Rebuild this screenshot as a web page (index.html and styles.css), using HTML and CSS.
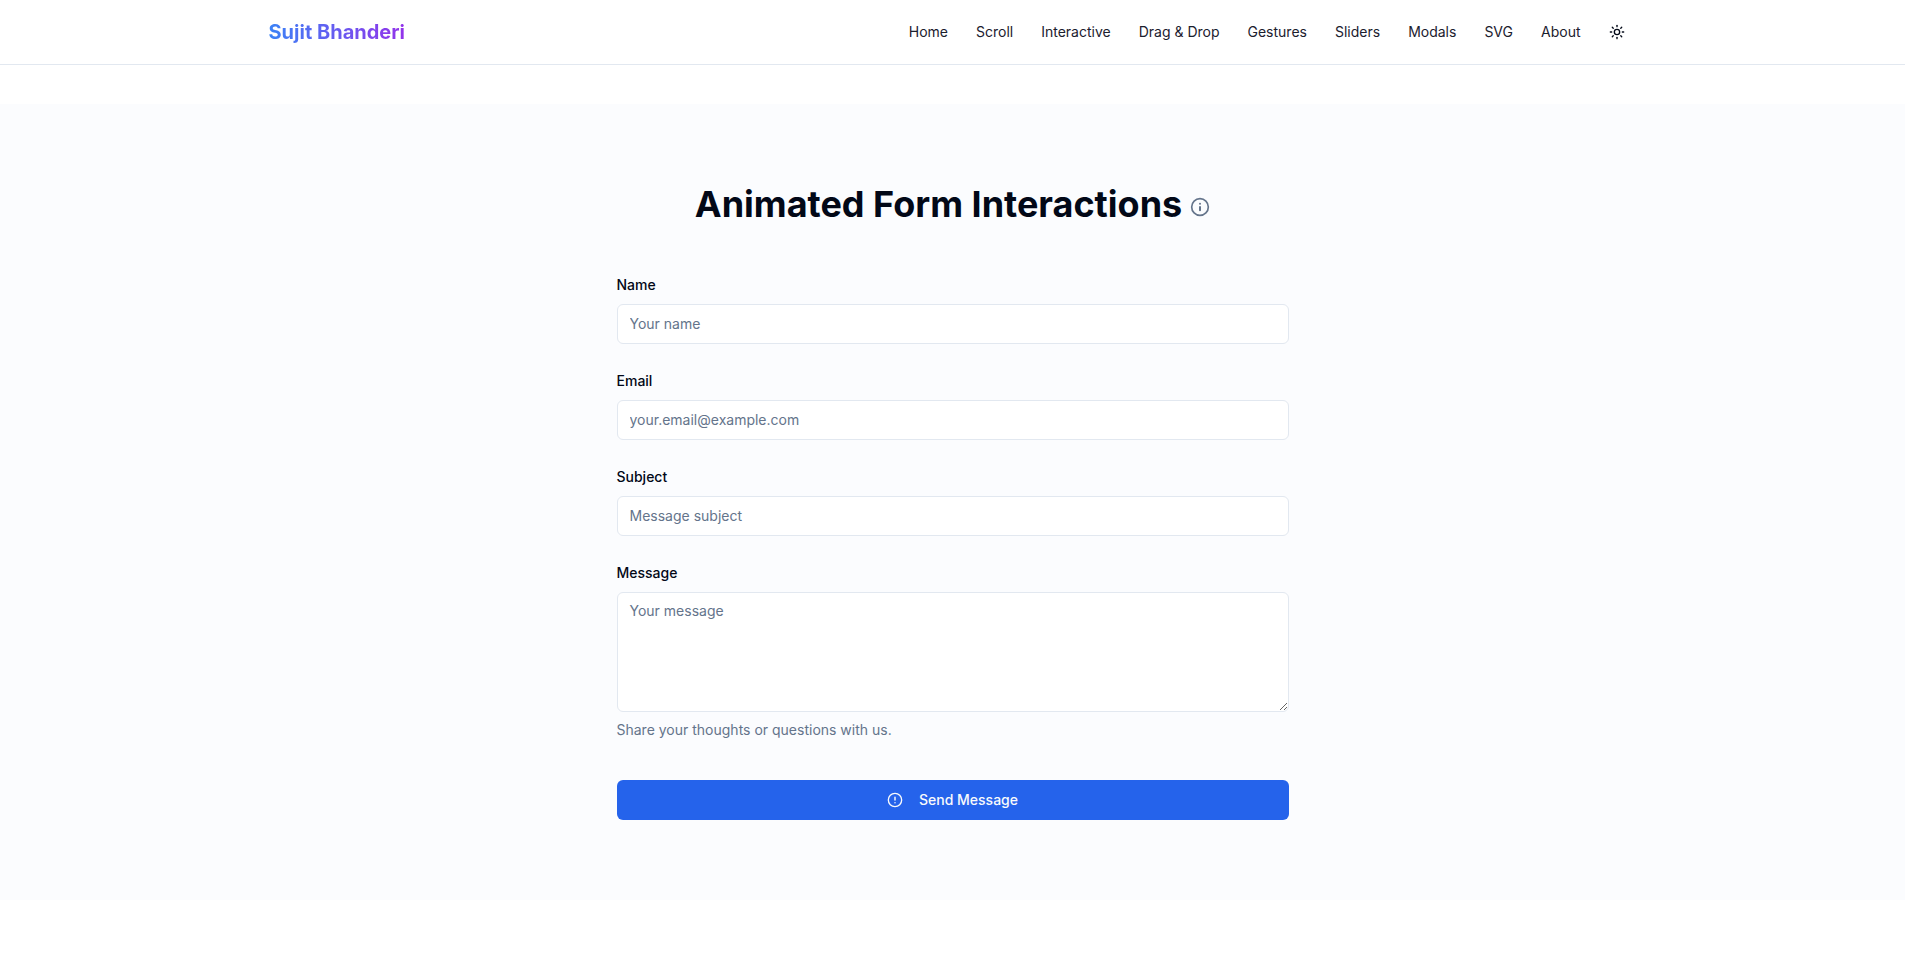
FILE: index.html
```
<!DOCTYPE html>
<html lang="en">
<head>
<meta charset="utf-8">
<title>Sujit Bhanderi</title>
<link rel="stylesheet" href="styles.css">
</head>
<body>
<header class="header">
  <div class="container">
    <a class="logo">Sujit Bhanderi</a>
    <nav class="nav">
      <a>Home</a><a>Scroll</a><a>Interactive</a><a>Drag &amp; Drop</a><a>Gestures</a><a>Sliders</a><a>Modals</a><a>SVG</a><a>About</a>
      <button class="theme" aria-label="Toggle theme">
        <svg width="16" height="16" viewBox="0 0 24 24" fill="none" stroke="currentColor" stroke-width="2" stroke-linecap="round" stroke-linejoin="round"><circle cx="12" cy="12" r="4"/><path d="M12 2v2"/><path d="M12 20v2"/><path d="m4.93 4.93 1.41 1.41"/><path d="m17.66 17.66 1.41 1.41"/><path d="M2 12h2"/><path d="M20 12h2"/><path d="m6.34 17.66-1.41 1.41"/><path d="m19.07 4.93-1.41 1.41"/></svg>
      </button>
    </nav>
  </div>
</header>
<main>
  <section class="section">
    <div class="title-row">
      <h2 class="title">Animated Form Interactions</h2>
      <svg class="info" width="20" height="20" viewBox="0 0 24 24" fill="none" stroke="currentColor" stroke-width="2" stroke-linecap="round"><circle cx="12" cy="12" r="10"/><path stroke-width="2.4" d="M12 16v-4M12 8h.01"/></svg>
    </div>
    <form class="form">
      <div class="field"><label for="name">Name</label><input id="name" placeholder="Your name"></div>
      <div class="field"><label for="email">Email</label><input id="email" placeholder="your.email@example.com"></div>
      <div class="field"><label for="subject">Subject</label><input id="subject" placeholder="Message subject"></div>
      <div class="field"><label for="message">Message</label><textarea id="message" placeholder="Your message"></textarea><p class="hint">Share your thoughts or questions with us.</p></div>
      <button type="button" class="submit">
        <svg width="16" height="16" viewBox="0 0 24 24" fill="none" stroke="currentColor" stroke-width="2" stroke-linecap="round"><circle cx="12" cy="12" r="10"/><path stroke-width="2.2" d="M12 8v4M12 16h.01"/></svg>
        <span>Send Message</span>
      </button>
    </form>
  </section>
</main>
</body>
</html>
```
FILE: styles.css
```
* { box-sizing: border-box; margin: 0; padding: 0; }
body { font-family: Inter, sans-serif; font-size: 16px; line-height: 24px; color: #020817; background: #fff; }
button, input, textarea { font: inherit; color: inherit; }
.header { height: 65px; border-bottom: 1px solid #e2e8f0; background: #fff; }
.container { max-width: 1400px; height: 64px; margin: 0 auto; padding: 0 16px; display: flex; align-items: center; justify-content: space-between; }
.logo { font-size: 20px; line-height: 28px; font-weight: 700; background: linear-gradient(to right, #3b82f6, #9333ea); -webkit-background-clip: text; background-clip: text; color: transparent; }
.nav { display: flex; align-items: center; gap: 28px; font-size: 14px; line-height: 20px; color: #1b202e; }
.theme { width: 40px; height: 40px; margin-left: -12px; border: 0; background: none; display: flex; align-items: center; justify-content: center; color: #020817; }
.section { margin-top: 39px; padding: 80px 16px; background: #fbfcfe; }
.title-row { display: flex; align-items: center; justify-content: center; gap: 8px; margin-bottom: 48px; }
.title { font-size: 36px; line-height: 40px; font-weight: 700; }
.info { color: #64748b; margin-top: 6px; }
.form { width: 672px; margin: 0 auto; display: flex; flex-direction: column; gap: 24px; }
.field { display: flex; flex-direction: column; gap: 8px; }
.field label { height: 24px; padding-top: 2px; font-size: 14px; line-height: 22px; font-weight: 500; }
.field input, .field textarea { width: 100%; height: 40px; padding: 8px 12px; border: 1px solid #e2e8f0; border-radius: 6px; background: #fff; font-size: 14px; line-height: 20px; }
.field input { padding: 7px 12px 9px; }
.field textarea { height: 120px; padding: 8px 12px; resize: vertical; display: block; }
.field ::placeholder { color: #64748b; opacity: 1; }
.hint { font-size: 14px; line-height: 20px; color: #64748b; }
.submit { height: 40px; margin-top: 16px; border: 0; border-radius: 6px; background: #2563eb; color: #f8fafc; font-size: 14px; line-height: 20px; font-weight: 500; display: flex; align-items: center; justify-content: center; gap: 16px; }
```
